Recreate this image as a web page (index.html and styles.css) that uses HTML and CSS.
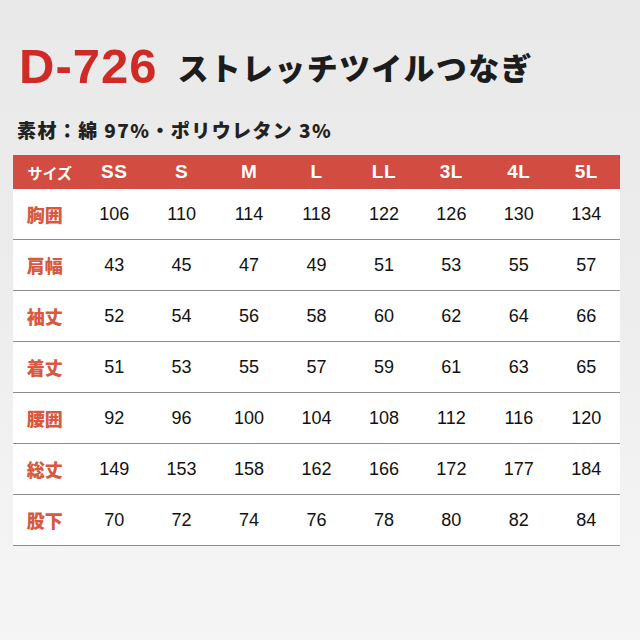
FILE: index.html
```html
<!DOCTYPE html>
<html lang="ja">
<head>
<meta charset="utf-8">
<title>D-726 ストレッチツイルつなぎ</title>
<link rel="stylesheet" href="styles.css">
</head>
<body>
<div class="page">
  <div class="title">
    <span class="code">D-726</span>
    <span class="name">ストレッチツイルつなぎ</span>
  </div>
  <div class="material">素材：綿 97%・ポリウレタン 3%</div>
  <div class="table">
    <div class="row head">
      <div class="cell lab">サイズ</div>
      <div class="cell">SS</div><div class="cell">S</div><div class="cell">M</div><div class="cell">L</div>
      <div class="cell">LL</div><div class="cell">3L</div><div class="cell">4L</div><div class="cell">5L</div>
    </div>
    <div class="row">
      <div class="cell lab">胸囲</div>
      <div class="cell">106</div><div class="cell">110</div><div class="cell">114</div><div class="cell">118</div>
      <div class="cell">122</div><div class="cell">126</div><div class="cell">130</div><div class="cell">134</div>
    </div>
    <div class="row">
      <div class="cell lab">肩幅</div>
      <div class="cell">43</div><div class="cell">45</div><div class="cell">47</div><div class="cell">49</div>
      <div class="cell">51</div><div class="cell">53</div><div class="cell">55</div><div class="cell">57</div>
    </div>
    <div class="row">
      <div class="cell lab">袖丈</div>
      <div class="cell">52</div><div class="cell">54</div><div class="cell">56</div><div class="cell">58</div>
      <div class="cell">60</div><div class="cell">62</div><div class="cell">64</div><div class="cell">66</div>
    </div>
    <div class="row">
      <div class="cell lab">着丈</div>
      <div class="cell">51</div><div class="cell">53</div><div class="cell">55</div><div class="cell">57</div>
      <div class="cell">59</div><div class="cell">61</div><div class="cell">63</div><div class="cell">65</div>
    </div>
    <div class="row">
      <div class="cell lab">腰囲</div>
      <div class="cell">92</div><div class="cell">96</div><div class="cell">100</div><div class="cell">104</div>
      <div class="cell">108</div><div class="cell">112</div><div class="cell">116</div><div class="cell">120</div>
    </div>
    <div class="row">
      <div class="cell lab">総丈</div>
      <div class="cell">149</div><div class="cell">153</div><div class="cell">158</div><div class="cell">162</div>
      <div class="cell">166</div><div class="cell">172</div><div class="cell">177</div><div class="cell">184</div>
    </div>
    <div class="row">
      <div class="cell lab">股下</div>
      <div class="cell">70</div><div class="cell">72</div><div class="cell">74</div><div class="cell">76</div>
      <div class="cell">78</div><div class="cell">80</div><div class="cell">82</div><div class="cell">84</div>
    </div>
  </div>
</div>
</body>
</html>
```
FILE: styles.css
```css
html, body {
  margin: 0;
  padding: 0;
}
body {
  width: 640px;
  height: 640px;
  overflow: hidden;
  background: linear-gradient(180deg, #e9e9e9 0%, #ececec 40%, #f2f2f2 75%, #f5f5f5 100%);
  font-family: "Liberation Sans", "Noto Sans CJK JP", sans-serif;
}
.page {
  padding-top: 42px;
}
.title {
  display: flex;
  align-items: center;
  height: 49px;
  padding-left: 19px;
}
.code {
  font-family: "Liberation Sans", sans-serif;
  font-weight: bold;
  font-size: 49px;
  line-height: 49px;
  letter-spacing: 1px;
  color: #cf2a26;
}
.name {
  margin-left: 20px;
  font-family: "Noto Sans CJK JP", sans-serif;
  font-weight: 900;
  font-size: 31px;
  line-height: 31px;
  letter-spacing: 1.3px;
  color: #1c1c1c;
}
.material {
  margin-top: 27px;
  padding-left: 17px;
  font-family: "Noto Sans CJK JP", sans-serif;
  font-weight: 900;
  font-size: 19px;
  line-height: 24px;
  letter-spacing: 1.4px;
  color: #222;
}
.table {
  margin: 13px 0 0 13px;
  width: 607px;
}
.row {
  display: grid;
  grid-template-columns: repeat(9, 1fr);
  align-items: center;
  height: 50px;
  background: #ffffff;
  border-bottom: 1px solid #8c8c8c;
}
.row.head {
  height: 34px;
  background: #d24c41;
  border-bottom: none;
}
.cell {
  text-align: center;
  font-size: 18px;
  color: #111111;
}
.row .lab {
  font-family: "Noto Sans CJK JP", sans-serif;
  font-weight: 900;
  font-size: 18px;
  color: #d65a3f;
  padding-right: 4px;
}
.row.head .cell {
  color: #ffffff;
  font-weight: bold;
  font-size: 19px;
  letter-spacing: 0.5px;
}
.row.head .lab {
  font-size: 15px;
  color: #ffffff;
  padding-right: 0;
  padding-left: 6px;
  letter-spacing: 0;
}
```
